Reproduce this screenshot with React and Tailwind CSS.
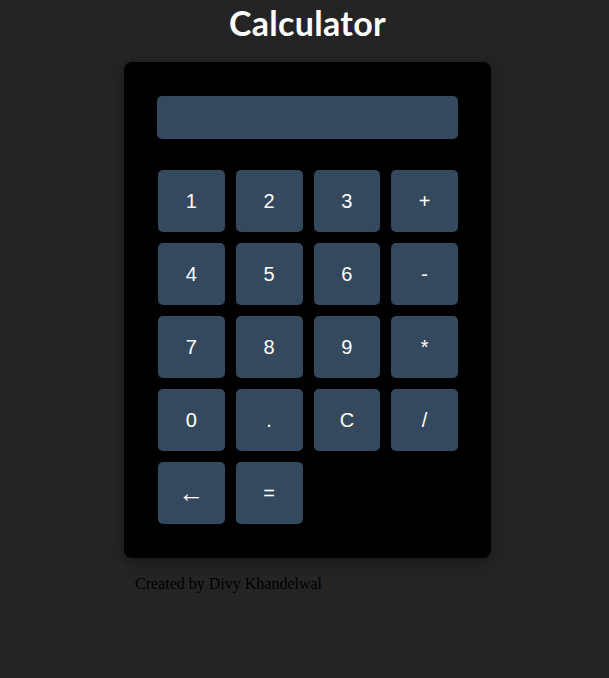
import React, { useState } from 'react'

const keys = ['1', '2', '3', '+', '4', '5', '6', '-', '7', '8', '9', '*', '0', '.', 'C', '/', '←', '=']

export default function App() {
  const [value, setValue] = useState('')

  const press = (k) => {
    if (k === 'C') return setValue('')
    if (k === '←') return setValue((v) => v.slice(0, -1))
    if (k === '=') {
      try {
        // eslint-disable-next-line no-new-func
        setValue(String(Function(`return (${value})`)()))
      } catch {
        setValue('Error')
      }
      return
    }
    setValue((v) => v + k)
  }

  return (
    <div className="min-h-screen bg-[#242424] pt-[3px] pl-[6px]">
      {/* Title */}
      <h1 className="text-center text-white text-[34px] font-bold leading-[40px] tracking-[0.3px] [font-family:'Lato',sans-serif]">
        Calculator
      </h1>

      {/* Calculator card */}
      <div className="mx-auto mt-[19px] w-[367px] bg-black rounded-lg shadow-[0_4px_12px_rgba(0,0,0,0.35)] px-[33px] pt-[34px] pb-[34px]">
        <div className="h-[43px] w-[301px] bg-[#34495e] rounded-[5px] text-white text-right px-3 text-[22px] leading-[43px] [font-family:'Liberation_Sans',Arial,sans-serif] overflow-hidden">
          {value}
        </div>

        <div className="mt-[31px] ml-[1px] grid grid-cols-4 gap-[11px] w-[300px]">
          {keys.map((k) => (
            <button
              key={k}
              onClick={() => press(k)}
              className={`h-[62px] bg-[#34495e] rounded-[5px] text-white [font-family:'Liberation_Sans',Arial,sans-serif] flex items-center justify-center ${
                k === '←' ? 'text-[26px]' : 'text-[20px]'
              }`}
            >
              {k}
            </button>
          ))}
        </div>
      </div>

      {/* Footer */}
      <p className="mt-[14px] ml-[129px] text-black text-[16px] [font-family:'Liberation_Serif','Times_New_Roman',serif]">
        Created by Divy Khandelwal
      </p>
    </div>
  )
}
